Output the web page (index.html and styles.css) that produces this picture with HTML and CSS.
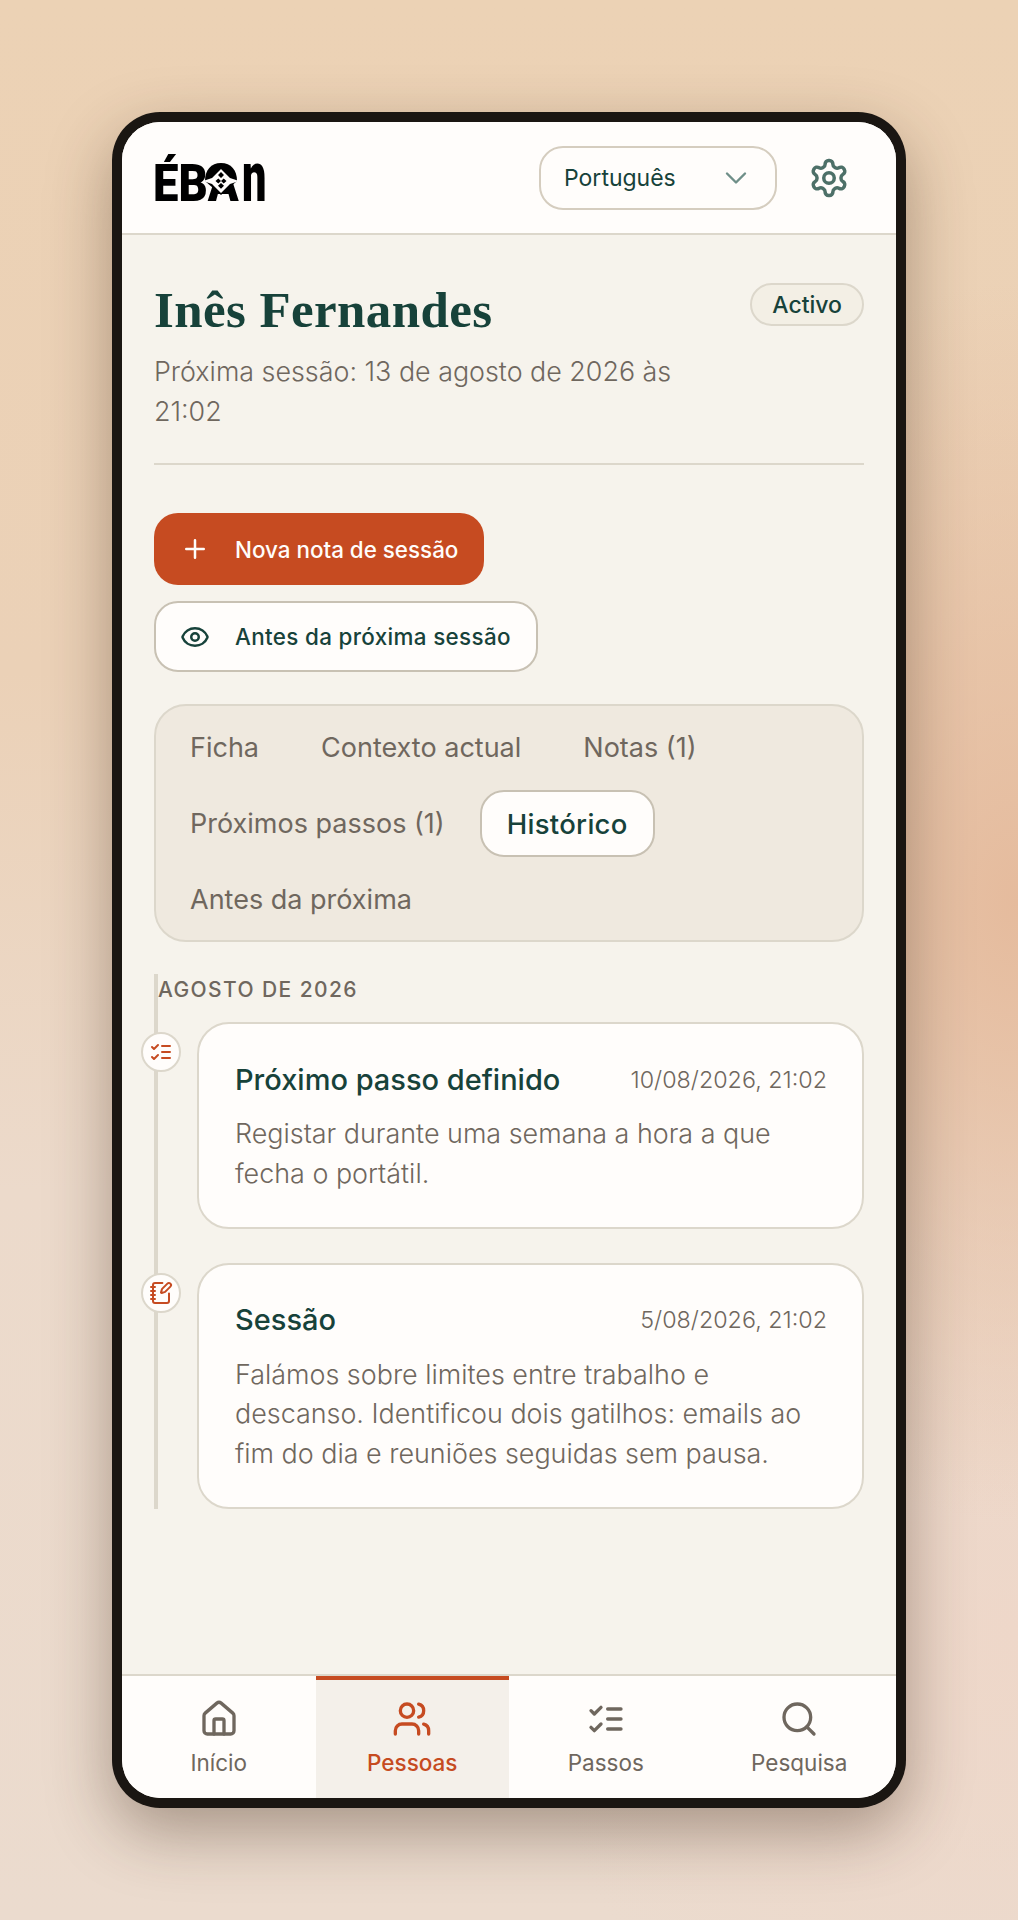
FILE: index.html
```html
<!DOCTYPE html>
<html lang="pt">

<head>
    <meta charset="utf-8">
    <meta name="viewport" content="width=device-width, initial-scale=1.0">
    <title>Ébano - Inês Fernandes</title>
    <link rel="stylesheet" href="styles.css">
</head>

<body>
    <div class="telefone">
        <div class="ecra">
            <header class="topo">
                <svg class="logo" viewBox="0 -20 114 84" role="img" aria-label="ÉBAN">
                    <text class="logo-letras" transform="translate(0 46.500) scale(0.890 1)">ÉBA</text>
                    <text class="logo-n" transform="translate(89 46.500) scale(0.620 1)">n</text>
                    <path d="M52 27c0-11 6-18 16-18s16 7 16 18l-16 14z" />
                    <path class="logo-branco" d="M68 15l9 9 9 3-9 3-9 9-9-9-9-3 9-3z" />
                    <path d="M68 18l3 3-3 3-3-3zM62.500 27l2.800-2.500 2.700 2.500-2.700 2.500zM73.500 27l-2.800-2.500-2.700 2.500 2.700 2.500zM68 29l3 2.800-3 3-3-3z" />
                </svg>
                <button class="idioma">
                    <span>Português</span>
                    <svg class="icone idioma-seta" viewBox="0 0 24 24"><path d="m6 9 6 6 6-6" /></svg>
                </button>
                <svg class="icone definicoes" viewBox="0 0 24 24">
                    <path d="M12.220 2h-.44a2 2 0 0 0-2 2v.18a2 2 0 0 1-1 1.730l-.43.25a2 2 0 0 1-2 0l-.15-.08a2 2 0 0 0-2.730.73l-.22.38a2 2 0 0 0 .73 2.730l.15.1a2 2 0 0 1 1 1.720v.51a2 2 0 0 1-1 1.740l-.15.09a2 2 0 0 0-.73 2.730l.22.38a2 2 0 0 0 2.730.73l.15-.08a2 2 0 0 1 2 0l.43.25a2 2 0 0 1 1 1.730V20a2 2 0 0 0 2 2h.44a2 2 0 0 0 2-2v-.18a2 2 0 0 1 1-1.730l.43-.25a2 2 0 0 1 2 0l.15.08a2 2 0 0 0 2.730-.73l.22-.39a2 2 0 0 0-.73-2.730l-.15-.08a2 2 0 0 1-1-1.740v-.5a2 2 0 0 1 1-1.740l.15-.09a2 2 0 0 0 .73-2.730l-.22-.38a2 2 0 0 0-2.730-.73l-.15.08a2 2 0 0 1-2 0l-.43-.25a2 2 0 0 1-1-1.730V4a2 2 0 0 0-2-2z" />
                    <circle cx="12" cy="12" r="3" />
                </svg>
            </header>

            <main class="conteudo">
                <section class="pessoa">
                    <div class="pessoa-info">
                        <h1>Inês Fernandes</h1>
                        <p>Próxima sessão: 13 de agosto de 2026 às 21:02</p>
                    </div>
                    <span class="estado">Activo</span>
                </section>

                <div class="accoes">
                    <button class="botao botao-principal">
                        <svg class="icone" viewBox="0 0 24 24"><path d="M5 12h14M12 5v14" /></svg>
                        Nova nota de sessão
                    </button>
                    <button class="botao botao-secundario">
                        <svg class="icone" viewBox="0 0 24 24">
                            <path d="M2.062 12.348a1 1 0 0 1 0-.696 10.750 10.750 0 0 1 19.876 0 1 1 0 0 1 0 .696 10.750 10.750 0 0 1-19.876 0" />
                            <circle cx="12" cy="12" r="3" />
                        </svg>
                        Antes da próxima sessão
                    </button>
                </div>

                <nav class="separadores">
                    <button>Ficha</button>
                    <button>Contexto actual</button>
                    <button>Notas (1)</button>
                    <button>Próximos passos (1)</button>
                    <button class="valgt">Histórico</button>
                    <button>Antes da próxima</button>
                </nav>

                <section class="historico">
                    <h3>AGOSTO DE 2026</h3>

                    <article class="evento">
                        <span class="no">
                            <svg class="icone" viewBox="0 0 24 24"><path d="m3 17 2 2 4-4M3 7l2 2 4-4M13 6h8M13 12h8M13 18h8" /></svg>
                        </span>
                        <div class="evento-topo">
                            <h2>Próximo passo definido</h2>
                            <time>10/08/2026, 21:02</time>
                        </div>
                        <p>Registar durante uma semana a hora a que fecha o portátil.</p>
                    </article>

                    <article class="evento">
                        <span class="no">
                            <svg class="icone" viewBox="0 0 24 24">
                                <path d="M13.400 2H6a2 2 0 0 0-2 2v16a2 2 0 0 0 2 2h12a2 2 0 0 0 2-2v-7.400M2 6h4M2 10h4M2 14h4M2 18h4" />
                                <path d="M21.378 5.626a1 1 0 1 0-3.004-3.004l-5.010 5.012a2 2 0 0 0-.506.854l-.837 2.870a.5.5 0 0 0 .62.62l2.870-.837a2 2 0 0 0 .854-.506z" />
                            </svg>
                        </span>
                        <div class="evento-topo">
                            <h2>Sessão</h2>
                            <time>5/08/2026, 21:02</time>
                        </div>
                        <p>Falámos sobre limites entre trabalho e descanso. Identificou dois gatilhos: emails ao fim do dia e reuniões seguidas sem pausa.</p>
                    </article>
                </section>
            </main>

            <footer class="menu">
                <a>
                    <svg class="icone" viewBox="0 0 24 24">
                        <path d="M15 21v-8a1 1 0 0 0-1-1h-4a1 1 0 0 0-1 1v8" />
                        <path d="M3 10a2 2 0 0 1 .709-1.528l7-5.999a2 2 0 0 1 2.582 0l7 5.999A2 2 0 0 1 21 10v9a2 2 0 0 1-2 2H5a2 2 0 0 1-2-2z" />
                    </svg>
                    Início
                </a>
                <a class="valgt">
                    <svg class="icone" viewBox="0 0 24 24">
                        <path d="M16 21v-2a4 4 0 0 0-4-4H6a4 4 0 0 0-4 4v2M22 21v-2a4 4 0 0 0-3-3.870M16 3.130a4 4 0 0 1 0 7.750" />
                        <circle cx="9" cy="7" r="4" />
                    </svg>
                    Pessoas
                </a>
                <a>
                    <svg class="icone" viewBox="0 0 24 24"><path d="m3 17 2 2 4-4M3 7l2 2 4-4M13 6h8M13 12h8M13 18h8" /></svg>
                    Passos
                </a>
                <a>
                    <svg class="icone" viewBox="0 0 24 24">
                        <circle cx="11" cy="11" r="8" />
                        <path d="m21 21-4.300-4.300" />
                    </svg>
                    Pesquisa
                </a>
            </footer>
        </div>
    </div>
</body>

</html>
```

FILE: styles.css
```css
* {
    box-sizing: border-box;
}

body {
    margin: 0;
    height: 1920px;
    display: flex;
    align-items: center;
    justify-content: center;
    font-family: Inter, "Noto Sans", sans-serif;
    color: #17423a;
    background:
        radial-gradient(420px 620px at 100% 47%, #e5bb9d 0%, rgba(229, 187, 157, 0) 100%),
        radial-gradient(500px 500px at 100% 85%, #eed7c9 0%, rgba(238, 215, 201, 0) 100%),
        linear-gradient(180deg, #ecd2b5 0%, #ebd1b7 35%, #ecdacb 62%, #ebdbce 100%);
}

button {
    font: inherit;
    color: inherit;
    background: none;
    border: 0;
    padding: 0;
}

.icone {
    fill: none;
    stroke: currentColor;
    stroke-width: 2;
    stroke-linecap: round;
    stroke-linejoin: round;
    flex: none;
}

.telefone {
    width: 794px;
    height: 1696px;
    padding: 10px;
    background: #1a1612;
    border-radius: 48px;
    box-shadow: 0 24px 64px rgba(58, 38, 22, 0.38);
}

.ecra {
    height: 100%;
    display: flex;
    flex-direction: column;
    background: #f6f3ec;
    border-radius: 38px;
    overflow: hidden;
}

/* topo */
.topo {
    height: 113px;
    flex: none;
    display: flex;
    align-items: flex-start;
    padding: 24px 46px 0 31px;
    background: #fffdfb;
    border-bottom: 2px solid #dcd7cb;
}

.logo {
    width: 114px;
    height: 84px;
    margin-right: auto;
    margin-top: -12px;
    fill: #000;
}

.logo text {
    font-family: Roboto, "Liberation Sans", sans-serif;
    font-weight: 900;
}

.logo .logo-letras {
    font-size: 51px;
}

.logo .logo-n {
    font-size: 70px;
}

.logo .logo-branco {
    fill: #fffdfb;
}

.idioma {
    width: 238px;
    height: 64px;
    display: flex;
    align-items: center;
    justify-content: space-between;
    padding: 0 21px 0 23px;
    font-size: 23px;
    font-weight: 400;
    border: 2px solid #d5cdbf;
    border-radius: 24px;
}

.idioma-seta {
    width: 36px;
    height: 36px;
    stroke-width: 1.600;
    color: #6f8f88;
}

.definicoes {
    width: 42px;
    height: 42px;
    margin-top: 11px;
    margin-left: 31px;
    color: #4d7068;
}

/* conteudo */
.conteudo {
    flex: 1;
    padding: 48px 32px 0;
}

.pessoa {
    display: flex;
    justify-content: space-between;
    align-items: flex-start;
    padding-bottom: 32px;
    border-bottom: 2px solid #dcd7cb;
}

.pessoa-info {
    width: 540px;
}

h1 {
    margin: -1px 0 14px;
    font-family: "Liberation Serif", serif;
    font-size: 51px;
    line-height: 56px;
    letter-spacing: 0.400px;
    font-weight: 700;
    color: #17423a;
}

.pessoa-info p {
    margin: 0;
    font-size: 26.850px;
    line-height: 39.500px;
    font-weight: 350;
    color: #6f675e;
}

.estado {
    height: 43px;
    padding: 0 20px;
    display: flex;
    align-items: center;
    font-size: 23px;
    font-weight: 500;
    background: #f3efe5;
    border: 2px solid #dcd7cb;
    border-radius: 22px;
}

.accoes {
    margin-top: 48px;
    display: flex;
    flex-direction: column;
    align-items: flex-start;
    gap: 16px;
}

.botao {
    height: 72px;
    display: flex;
    align-items: center;
    gap: 25px;
    padding: 0 26px;
    font-size: 22.400px;
    font-weight: 550;
    border-radius: 24px;
}

.botao .icone {
    width: 30px;
    height: 30px;
}

.botao-principal {
    color: #fffdfb;
    background: #c64b21;
}

.botao-secundario {
    height: 71px;
    padding: 0 25px 0 24px;
    letter-spacing: 0.350px;
    background: #fffdfb;
    border: 2px solid #c8c1b3;
}

.separadores {
    margin-top: 32px;
    display: flex;
    flex-wrap: wrap;
    gap: 9px 8px;
    padding: 8px 7px;
    height: 238px;
    align-content: flex-start;
    background: #efe9df;
    border: 2px solid #dcd7cb;
    border-radius: 32px;
}

.separadores button {
    height: 67px;
    padding: 0 25px;
    font-size: 27px;
    font-weight: 400;
    color: #6f675e;
    border: 2px solid transparent;
    border-radius: 24px;
}

.separadores .valgt {
    color: #17423a;
    font-size: 27.500px;
    font-weight: 550;
    letter-spacing: 0.300px;
    background: #fffdfb;
    border-color: #c8c1b3;
}

.historico {
    position: relative;
    margin-top: 32px;
    padding-left: 39px;
    border-left: 4px solid #dcd7cb;
}

h3 {
    margin: 0 0 16px -39px;
    height: 32px;
    line-height: 32px;
    font-size: 21px;
    font-weight: 500;
    letter-spacing: 1.400px;
    color: #6f675e;
}

.evento {
    position: relative;
    padding: 32px 35px 33.500px 36px;
    background: #fffdfb;
    border: 2px solid #dcd7cb;
    border-radius: 32px;
}

.evento + .evento {
    margin-top: 34px;
}

.no {
    position: absolute;
    left: -58px;
    top: 8px;
    width: 40px;
    height: 40px;
    display: flex;
    align-items: center;
    justify-content: center;
    color: #c64b21;
    background: #fffdfb;
    border: 2px solid #dcd7cb;
    border-radius: 50%;
}

.no .icone {
    width: 24px;
    height: 24px;
}

.evento-topo {
    display: flex;
    justify-content: space-between;
    align-items: center;
    height: 46px;
    margin-bottom: 12px;
}

h2 {
    margin: 0;
    font-size: 29px;
    font-weight: 500;
    color: #17423a;
}

time {
    font-size: 23.300px;
    font-weight: 350;
    color: #6f675e;
}

.evento p {
    margin: 0;
    font-size: 26.900px;
    line-height: 39.500px;
    font-weight: 350;
    color: #6f675e;
}

/* menu */
.menu {
    height: 124px;
    flex: none;
    display: grid;
    grid-template-columns: repeat(4, 1fr);
    background: #fffdfb;
    border-top: 2px solid #dcd7cb;
}

.menu a {
    display: flex;
    flex-direction: column;
    align-items: center;
    padding-top: 23px;
    gap: 10px;
    font-size: 22.500px;
    font-weight: 400;
    color: #6f675e;
}

.menu .icone {
    width: 40px;
    height: 40px;
}

.menu .valgt {
    color: #c64b21;
    font-weight: 500;
    background: #f4f0ea;
    border-top: 4px solid #c64b21;
    padding-top: 19px;
}
```
